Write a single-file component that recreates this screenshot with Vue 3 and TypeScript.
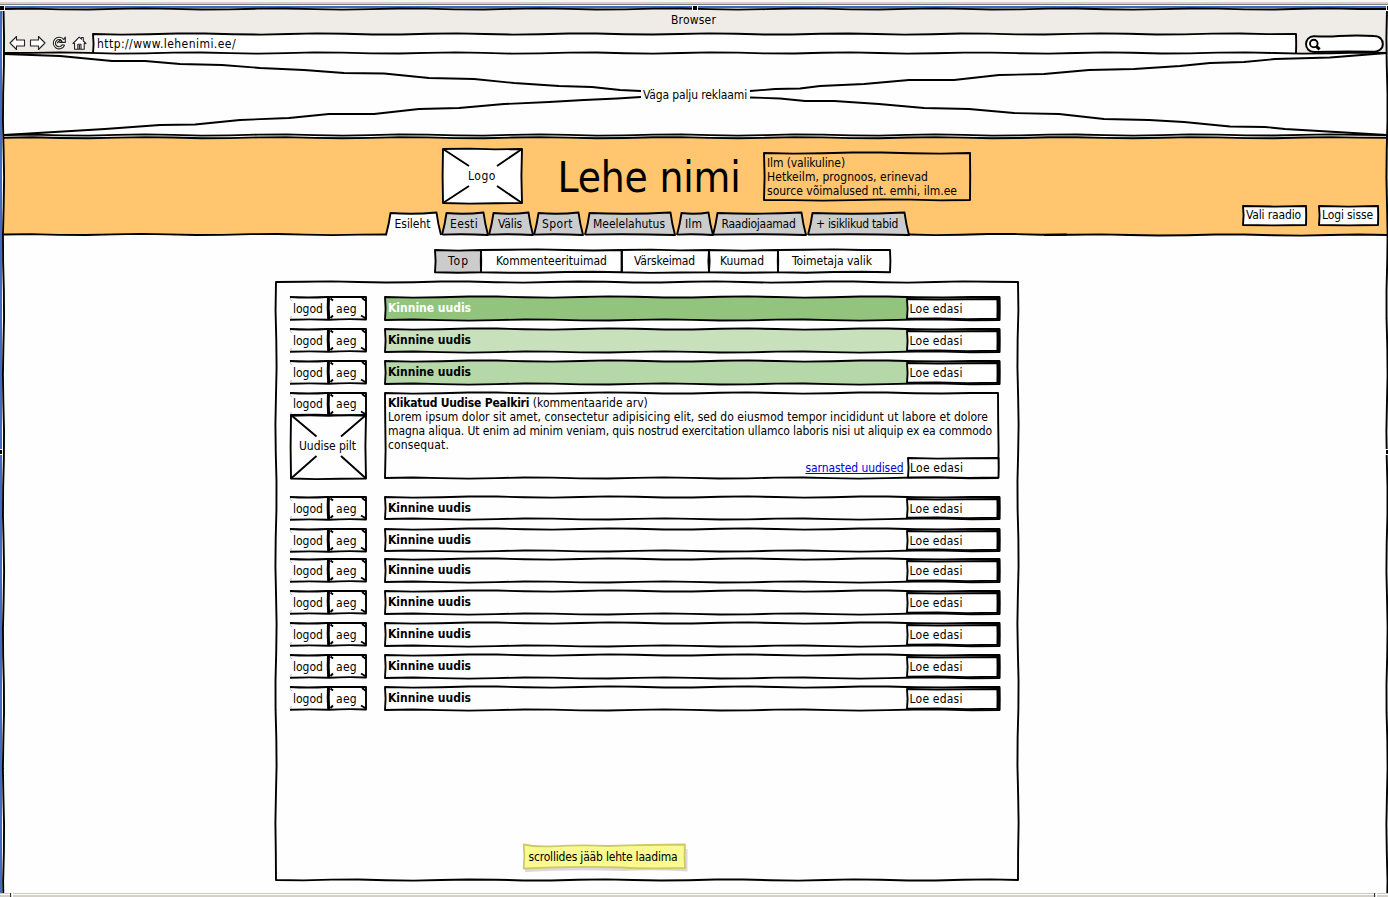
<script setup lang="ts">
type Point = [number, number]

interface Tab { label: string; width: number; text: number; gap: number; active?: boolean }
interface Segment { label: string; width: number; pad: number; text: number; active?: boolean }
interface News { height: number; gap: number; tone: string; open?: boolean }

const tabs: Tab[] = [
  { label: 'Esileht', width: 55, text: 36, gap: 1, active: true },
  { label: 'Eesti', width: 46, text: 28, gap: 1 },
  { label: 'Välis', width: 44, text: 24, gap: 1 },
  { label: 'Sport', width: 49, text: 31, gap: 2 },
  { label: 'Meelelahutus', width: 90, text: 72, gap: 1.5 },
  { label: 'Ilm', width: 36, text: 17, gap: 0.5 },
  { label: 'Raadiojaamad', width: 93, text: 74, gap: 1.5 },
  { label: '+ isiklikud tabid', width: 101, text: 82, gap: 0 },
]

const segments: Segment[] = [
  { label: 'Top', width: 46, pad: 13, text: 21, active: true },
  { label: 'Kommenteerituimad', width: 140.5, pad: 15, text: 111 },
  { label: 'Värskeimad', width: 87, pad: 12.5, text: 61 },
  { label: 'Kuumad', width: 69, pad: 11.5, text: 44 },
  { label: 'Toimetaja valik', width: 112, pad: 14.5, text: 80 },
]

const news: News[] = [
  { height: 23, gap: 9, tone: 'strong' },
  { height: 23, gap: 9, tone: 'light' },
  { height: 23, gap: 9, tone: 'medium' },
  { height: 85, gap: 19, tone: 'plain', open: true },
  { height: 22, gap: 10, tone: 'plain' },
  { height: 22, gap: 8, tone: 'plain' },
  { height: 23, gap: 9, tone: 'plain' },
  { height: 23, gap: 9, tone: 'plain' },
  { height: 23, gap: 9, tone: 'plain' },
  { height: 23, gap: 9, tone: 'plain' },
  { height: 23, gap: 0, tone: 'plain' },
]

const story = [
  { text: 'Lorem ipsum dolor sit amet, consectetur adipisicing elit, sed do eiusmod tempor incididunt ut labore et dolore', width: 600 },
  { text: 'magna aliqua. Ut enim ad minim veniam, quis nostrud exercitation ullamco laboris nisi ut aliquip ex ea commodo', width: 604 },
  { text: 'consequat.', width: 61 },
]

// Spreads a line of text over an exact width by adjusting its tracking.
const vFit = {
  mounted(el: HTMLElement, binding: { value: number }) {
    const count = (el.textContent ?? '').trim().length
    const natural = el.getBoundingClientRect().width
    if (count > 0) el.style.letterSpacing = `${(binding.value - natural) / count}px`
  },
}

// Hand-drawn edge: a straight run with slow, sub-pixel drift.
function edge(a: Point, b: Point, seed: number, sway = 0.6): string {
  const length = Math.hypot(b[0] - a[0], b[1] - a[1])
  const steps = Math.max(2, Math.round(length / 28))
  const nx = -(b[1] - a[1]) / length
  const ny = (b[0] - a[0]) / length
  let d = ''
  for (let i = 1; i <= steps; i++) {
    const t = i / steps
    const off = i === steps ? 0 : sway * Math.sin(i * 1.35 + seed * 2.1)
    d += ` L${(a[0] + (b[0] - a[0]) * t + nx * off).toFixed(2)} ${(a[1] + (b[1] - a[1]) * t + ny * off).toFixed(2)}`
  }
  return d
}

function frame(w: number, h: number, seed = 1): string {
  return `M0 0${edge([0, 0], [w, 0], seed)}${edge([w, 0], [w, h], seed + 1)}${edge([w, h], [0, h], seed + 2)}${edge([0, h], [0, 0], seed + 3)}Z`
}

function line(x1: number, y1: number, x2: number, y2: number, seed = 1): string {
  return `M${x1} ${y1}${edge([x1, y1], [x2, y2], seed)}`
}

function tabShape(w: number, closed: boolean): string {
  return `M0 23 Q3 12 4.5 1 Q${w / 2} 2.6 ${w - 4.5} 0.5 Q${w - 3} 12 ${w} 23${closed ? ` Q${w / 2} 21.8 0 22.6` : ''}`
}
</script>

<template>
  <div class="screen">
    <div class="strip"></div>
    <main class="browser">
      <svg class="ink outer" width="1388" height="885">
        <path :d="frame(1383.5, 900, 2)" transform="translate(3.5 1)" />
      </svg>

      <header class="chrome">
        <div class="title"><span v-fit="45" class="t">Browser</span></div>
        <div class="toolbar">
          <svg class="icons" width="80" height="18" viewBox="0 0 80 18">
            <path d="M1 9 L7.5 2.5 V6 H15.5 V12 H7.5 V15.5 Z" />
            <path d="M36 9 L29.5 2.5 V6 H21.5 V12 H29.5 V15.5 Z" />
            <path d="M54.8 5.6 A5.8 5.8 0 1 0 55.5 11.2 L53.2 10.8 A3.6 3.6 0 1 1 53 7.2 L50.7 8.4 H56.3 V3 Z M48 9 L52 5.5" />
            <path d="M64 9.5 L70.2 3.2 L72.5 5.2 V3.5 H74.3 V7 L77 9.5 H75.2 V15.3 H65.6 V9.5 Z M68.8 15 V10.3 H72 V15 M70.4 11 V15" />
          </svg>
          <div class="url">
            <svg class="ink" width="1204" height="19"><path :d="frame(1203, 20, 3)" /></svg>
            <span v-fit="139" class="t">http://www.lehenimi.ee/</span>
          </div>
          <div class="search">
            <svg width="79" height="19" viewBox="0 0 79 19">
              <path class="pill" d="M9 2.2 Q22 3 34 2 Q52 1 69 2 C75 2 78 6 77.8 10 C78 15 73 18 69 17.8 Q40 17 9 18 C4 18 1 14 1 10 C1 6 4 2 9 2.2 Z" />
              <circle cx="8.8" cy="9.5" r="3.8" />
              <path class="handle" d="M11.4 12.3 L14.6 15.4" />
            </svg>
          </div>
        </div>
      </header>

      <section class="ad">
        <svg class="ink thin" width="1384" height="84">
          <path :d="line(0, 0, 1383, 0, 4)" />
          <path :d="line(0, 82, 1383, 82, 2)" />
          <path d="M0 1 L56 3 L108 8 L141 8 L176 11 L218 12 L256 15 L300 17 L340 20 L380 20.5 L425 25 L470 26 L510 30 L555 33 L588 34 L616 37 L637 38" />
          <path d="M0 82 L101 76 L156 72 L191 71.5 L236 67 L285 65 L325 61 L370 61 L415 56 L455 55 L500 51 L545 49 L580 47 L613 45.5 L637 44" />
          <path d="M746 38 L771 36 L796 35.5 L816 33 L860 31 L905 27 L950 27 L995 22 L1040 21 L1085 17 L1130 16 L1176 13 L1206 10 L1240 9 L1271 6 L1326 4.5 L1383 0" />
          <path d="M746 44.5 L776 45.5 L801 48 L830 48 L875 51 L920 55 L965 56 L1010 60 L1055 61 L1100 66 L1145 67 L1180 69 L1226 73.5 L1261 74 L1281 76 L1383 82" />
        </svg>
        <span v-fit="104" class="t">Väga palju reklaami</span>
      </section>

      <section class="masthead">
        <svg class="ink" width="1384" height="98">
          <path :d="line(0, 0.7, 1383, 0.7, 5)" />
          <path :d="line(0, 97.5, 383, 97.5, 2)" />
          <path :d="line(905, 97.5, 1063, 97.5, 3)" />
          <path :d="line(1040, 98, 1383, 98, 7)" />
        </svg>
        <div class="identity">
          <div class="brand">
            <div class="logo">
              <svg class="ink" width="80" height="55">
                <path class="paper" :d="frame(79, 54, 2)" />
                <path d="M0 0 L26 17 M79 0 L54 17 M0 54 L26 37 M79 54 L54 37" />
              </svg>
              <span v-fit="28" class="t">Logo</span>
            </div>
            <h1><span v-fit="183" class="t big">Lehe nimi</span></h1>
            <div class="weather">
              <svg class="ink" width="207" height="48"><path :d="frame(206, 47, 3)" /></svg>
              <span v-fit="78" class="t">Ilm (valikuline)</span>
              <span v-fit="161" class="t">Hetkeilm, prognoos, erinevad</span>
              <span v-fit="190" class="t">source võimalused nt. emhi, ilm.ee</span>
            </div>
          </div>
          <nav class="tabs">
            <a v-for="tab in tabs" :key="tab.label" class="tab" :class="{ active: tab.active }" :style="{ width: tab.width + 'px', marginRight: tab.gap + 'px' }">
              <svg class="ink" :width="tab.width" height="24"><path :d="tabShape(tab.width, !tab.active)" /></svg>
              <span v-fit="tab.text" class="t">{{ tab.label }}</span>
            </a>
          </nav>
        </div>
        <div class="actions">
          <button class="choose">
            <svg class="ink" width="64" height="20"><path class="paper" :d="frame(63, 19, 3)" /></svg>
            <span v-fit="55" class="t">Vali raadio</span>
          </button>
          <button class="login">
            <svg class="ink" width="60" height="20"><path class="paper" :d="frame(59, 19, 3)" /></svg>
            <span v-fit="51" class="t">Logi sisse</span>
          </button>
        </div>
      </section>

      <nav class="filters">
        <a v-for="(s, i) in segments" :key="s.label" class="segment" :class="{ active: s.active }" :style="{ width: s.width + 'px', paddingLeft: s.pad + 'px' }">
          <svg class="ink" :width="s.width" height="23"><path :d="frame(s.width, 22.3, i + 3)" /></svg>
          <span v-fit="s.text" class="t">{{ s.label }}</span>
        </a>
      </nav>

      <section class="panel">
        <svg class="ink" width="743" height="599"><path :d="frame(742, 598, 4)" /></svg>
        <article v-for="(item, i) in news" :key="i" class="row" :style="{ height: item.height + 'px', marginBottom: item.gap + 'px' }">
          <div class="side">
            <div class="meta" :class="{ raised: item.open }">
              <svg class="ink" width="76" height="23">
                <path d="M0 0 Q18 1 37 0 L76 0 V22.5 Q57 21.6 39 22.8 Q20 22 0 22.8" />
                <path class="heavy" d="M38.5 0 Q37.8 11 38.7 22.5" />
                <path d="M40.5 1.5 L43 3.5 M72 1 L76 4 M40.5 21 L43 18.5 M71 18.5 L76 21.5" />
                <path class="faint" d="M0 1 L1.5 4 M0 22 L1.5 19" />
              </svg>
              <span v-fit="31" class="t logod">logod</span>
              <span v-fit="21" class="t">aeg</span>
            </div>
            <div v-if="item.open" class="photo">
              <svg class="ink" width="76" height="65">
                <path :d="frame(75, 63.5, 2)" />
                <path d="M0 0 L25.5 21.5 M75 0 L50 21.5 M0 63.5 L25.5 41 M75 63.5 L50 41" />
              </svg>
              <span v-fit="57" class="t">Uudise pilt</span>
            </div>
          </div>

          <div v-if="item.open" class="story">
            <svg class="ink" width="614" height="86"><path :d="frame(613, 85, 3)" /></svg>
            <p>
              <span class="headline"><b v-fit="145" class="t">Klikatud Uudise Pealkiri&nbsp;</b><span v-fit="115" class="t">(kommentaaride arv)</span></span>
              <span v-for="s in story" :key="s.text" v-fit="s.width" class="t">{{ s.text }}</span>
            </p>
            <footer>
              <a v-fit="98" class="t link">sarnasted uudised</a>
              <div class="more tall">
                <svg class="ink" width="91" height="20"><path class="paper" :d="frame(90.5, 19.5, 3)" /></svg>
                <span v-fit="53" class="t">Loe edasi</span>
              </div>
            </footer>
          </div>

          <div v-else class="bar" :class="item.tone">
            <svg class="ink" width="615" height="23"><path :d="frame(614.5, item.height, 3)" /></svg>
            <b v-fit="83" class="t">Kinnine uudis</b>
            <div class="more">
              <svg class="ink" width="91" height="20">
                <path class="paper" :d="frame(90.5, item.height - 3.3, 3)" />
                <path class="side-edge" :d="`M91.5 -1.5 V${item.height - 2}`" />
              </svg>
              <span v-fit="53" class="t">Loe edasi</span>
            </div>
          </div>
        </article>

        <aside class="note">
          <svg class="ink" width="166" height="28">
            <path class="shade" d="M2 5 H164.5 V27.5 Q130 25.5 100 27 Q50 25 2 28 Z" />
            <path class="sticky" d="M0.7 0.5 Q12 3 28 2.3 Q60 0.5 85 2 Q125 0.5 162 0.5 Q161 12 162 24 Q120 25 100 23.5 Q50 22 0.7 24.5 Q2 12 0.7 0.5 Z" />
          </svg>
          <span v-fit="149" class="t">scrollides jääb lehte laadima</span>
        </aside>
      </section>

      <i class="grip nw"></i><i class="grip n"></i><i class="grip ne"></i><i class="grip w"></i><i class="grip e"></i>
    </main>
    <div class="status"><i></i><i></i></div>
  </div>
</template>

<style>
html, body { margin: 0; background: #fff; }
</style>

<style scoped>
.screen { width: 1388px; height: 897px; overflow: hidden; display: flex; flex-direction: column; color: #000; font: 12px/14px "DejaVu Sans Condensed", "DejaVu Sans", sans-serif; font-stretch: condensed; }
.t { display: inline-block; white-space: pre; line-height: 14px; flex: none; position: relative; }
.ink { position: absolute; left: 0; top: 0; overflow: visible; pointer-events: none; }
.ink path { fill: none; stroke: #000; stroke-width: 1.9; stroke-linejoin: round; }
.ink.outer { z-index: 1; }
.ink.thin path { stroke-width: 1.8; }
.ink .paper { fill: #fff; }
.strip { height: 8px; flex: none; background: linear-gradient(#f7f6f4 0 2px, #d4d0c8 2px 4px, #808080 4px 5px, #fff 5px 6px, #426abf 6px 8px); }
.browser { position: relative; box-sizing: border-box; height: 885px; flex: none; padding-left: 4px; background: linear-gradient(90deg, #426abf 0 2px, #fff 2px 4px, #fefefe 4px); }

.chrome { height: 45px; background: #efebe7; }
.title { display: flex; box-sizing: border-box; height: 26px; padding: 5px 0 0 667px; }
.toolbar { display: flex; height: 19px; padding-left: 5px; }
.icons { margin-right: 4px; }
.icons path { fill: #fff; stroke: #222; stroke-width: 1.1; stroke-linejoin: round; }
.url { position: relative; width: 1203px; height: 19px; margin-right: 9px; padding: 3px 0 0 4px; box-sizing: border-box; background: #fff; }
.search svg { display: block; fill: none; stroke: #000; stroke-width: 1.9; overflow: visible; }
.search .pill { fill: #fff; }
.search .handle { stroke-width: 3; }

.ad { position: relative; box-sizing: border-box; height: 84px; padding: 35px 0 0 639px; background: #fefefe; }

.masthead { position: relative; display: flex; height: 98px; background: #ffc56f; }
.identity { width: 1239px; }
.brand { display: flex; height: 75px; padding-left: 439px; box-sizing: border-box; }
.logo { position: relative; width: 79px; height: 54px; margin-top: 12px; padding: 20px 0 0 25px; box-sizing: border-box; }
h1 { margin: 0; padding: 16px 0 0 35.5px; width: 242px; box-sizing: border-box; font-weight: normal; }
.big { font-size: 42px; line-height: 50px; }
.weather { position: relative; display: flex; flex-direction: column; align-items: flex-start; box-sizing: border-box; width: 206px; height: 47px; margin-top: 16px; padding: 3px 0 0 3px; }
.tabs { display: flex; padding-left: 382px; height: 23px; }
.tab { position: relative; display: flex; justify-content: center; flex: none; padding-top: 5px; height: 18px; }
.tab .t { left: -1px; }
.tab .ink path { fill: #ccc; }
.tab.active .ink path { fill: #fefefe; }
.actions { display: flex; align-items: flex-start; padding-top: 69px; }
.actions button { all: unset; position: relative; display: flex; box-sizing: border-box; height: 19px; padding: 2px 0 0 3px; }
.actions .choose { width: 63px; margin-right: 13px; }
.actions .login { width: 59px; }

.filters { display: flex; width: 455px; height: 23px; margin: 14.5px 0 0 431px; }
.segment { position: relative; display: flex; flex: none; box-sizing: border-box; padding-top: 4.5px; }
.segment.active { background: #ccc; }

.panel { position: relative; box-sizing: border-box; width: 742px; height: 598px; margin: 9.5px 0 0 271.5px; padding: 15px 0 0 14.5px; }
.row { display: flex; }
.side { width: 95px; flex: none; }
.meta { position: relative; display: flex; box-sizing: border-box; height: 22px; padding: 5px 0 0 3px; }
.meta.raised { padding-top: 4px; }
.logod { width: 31px; margin-right: 12px; }
.ink .heavy { stroke-width: 3; }
.ink .faint { stroke: #bbb; stroke-width: 1; }
.ink .side-edge { stroke-width: 3.4; }
.photo { position: relative; width: 75px; height: 64px; margin: -0.5px 0 0 1px; padding: 24.5px 0 0 8px; box-sizing: border-box; }
.bar { position: relative; display: flex; justify-content: space-between; width: 614.5px; padding: 4px 2px 0 3px; box-sizing: border-box; height: 100%; }
.strong { background: #93c47d; }
.strong b { color: #fff; }
.light { background: #c8e0bc; }
.medium { background: #b6d7a8; }
.more { position: relative; box-sizing: border-box; width: 90.5px; height: 19px; margin-top: -2px; padding: 3px 0 0 2.6px; }
.story { position: relative; display: flex; flex-direction: column; justify-content: space-between; width: 613px; height: 85px; }
.story p { display: flex; flex-direction: column; align-items: flex-start; margin: 0; padding: 3px 0 0 3px; }
.headline { display: flex; }
.story footer { display: flex; justify-content: flex-end; gap: 4px; }
.story footer .link { margin-top: 3px; }
.more.tall { height: 20px; margin: 0; }
.link { color: #0000e0; text-decoration: underline; }
.note { position: relative; display: flex; box-sizing: border-box; width: 163px; height: 26px; margin: 134px 0 0 232.5px; padding: 6px 0 0 6px; }
.ink .sticky { fill: #fafa91; stroke: #cccb68; stroke-width: 1.8; }
.ink .shade { fill: #ddd8dc; stroke: none; }

.grip { position: absolute; z-index: 2; width: 4px; height: 4px; background: #000; outline: 1px solid #fff; }
.nw { left: 0; top: -2px; }
.n { left: 693px; top: -2px; }
.ne { left: 1387px; top: -2px; }
.w { left: -2px; top: 442px; }
.e { left: 1386px; top: 442px; }
.status { position: relative; z-index: 3; display: flex; justify-content: space-between; flex: none; height: 4px; padding: 0 13px 0 10px; background: linear-gradient(#ccc9c4 0 1px, #fff 1px 2px, #d4d0c8 2px); }
.status i { width: 1px; height: 4px; background: #333; box-shadow: 2px 0 #fff; }
</style>
